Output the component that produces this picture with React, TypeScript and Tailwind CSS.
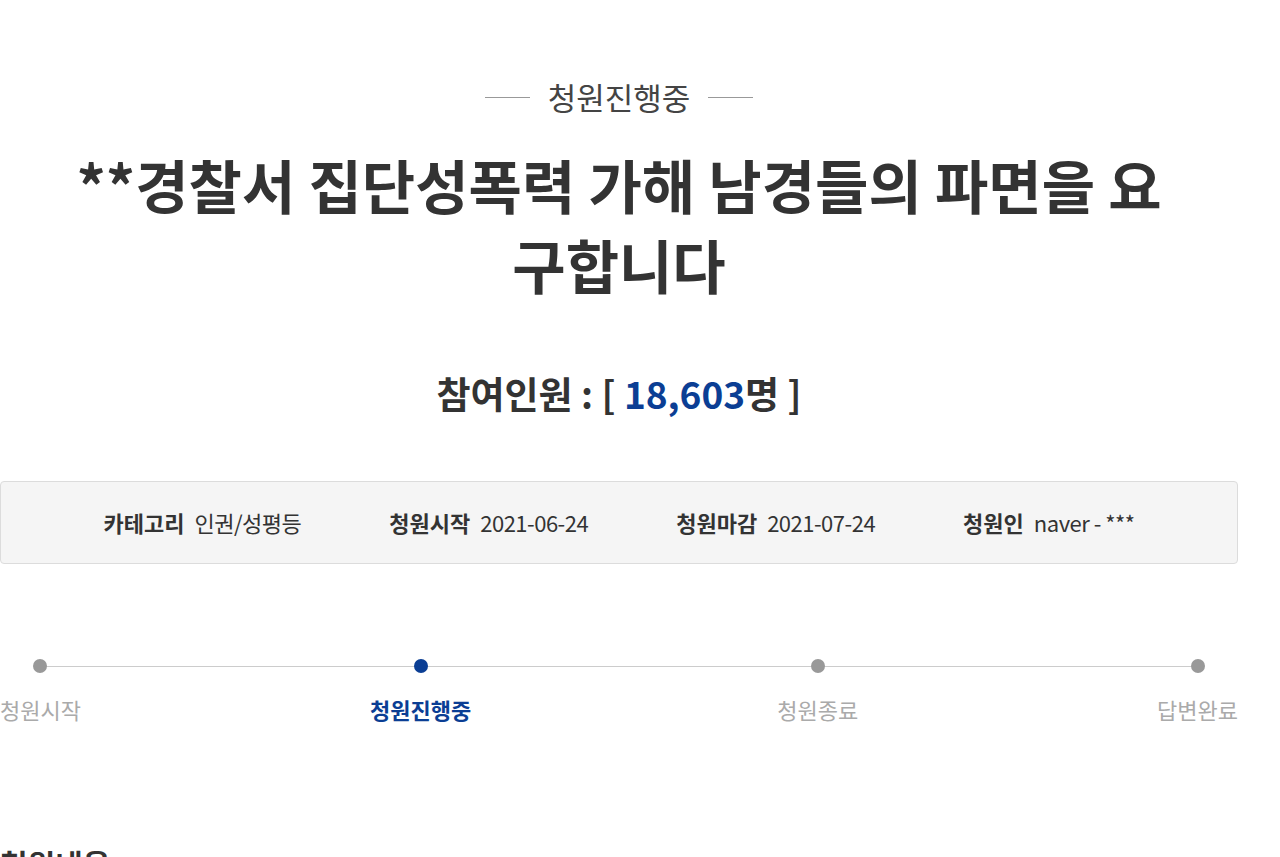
import React from 'react';

const font = "font-['Noto_Sans_CJK_KR','Noto_Sans',sans-serif]";

const infoItems = [
  { label: '카테고리', value: '인권/성평등' },
  { label: '청원시작', value: '2021-06-24' },
  { label: '청원마감', value: '2021-07-24' },
  { label: '청원인', value: 'naver - ***' },
];

const steps = [
  { label: '청원시작', active: false, className: '' },
  { label: '청원진행중', active: true, className: 'ml-[289px]' },
  { label: '청원종료', active: false, className: 'ml-[306px]' },
  { label: '답변완료', active: false, className: 'ml-auto' },
];

const App = () => {
  return (
    <div className={`w-[1238px] bg-white text-[#333] ${font}`}>
      <div className="flex flex-row items-center justify-center gap-x-[18px] pt-[74px]">
        <span className="h-px w-[45px] bg-[#999]" />
        <p className="text-[31px] leading-[46px] text-[#444]">청원진행중</p>
        <span className="h-px w-[45px] bg-[#999]" />
      </div>

      <h1 className="mt-[24px] px-[70px] text-center text-[58px] font-bold leading-[80px] text-[#333]">
        **경찰서 집단성폭력 가해 남경들의 파면을 요구합니다
      </h1>

      <p className="mt-[62px] text-center text-[37px] font-bold leading-[54px] text-[#333]">
        참여인원 : [ <span className="text-[#0b3e94]">18,603</span>명 ]
      </p>

      <div className="mt-[61px] flex h-[83px] flex-row items-center justify-center gap-x-[88px] rounded-[4px] border border-[#dcdcdc] bg-[#f5f5f5]">
        {infoItems.map((item) => (
          <div key={item.label} className="flex flex-row items-center gap-x-[10px] text-[22px]">
            <span className="font-bold text-[#333]">{item.label}</span>
            <span className="tracking-[-0.5px] text-[#333]">{item.value}</span>
          </div>
        ))}
      </div>

      <div className="relative mt-[95px]">
        <div className="absolute left-[41px] right-[41px] top-[7px] h-px bg-[#cccccc]" />
        <div className="relative flex flex-row">
          {steps.map((step) => (
            <div key={step.label} className={`flex flex-col items-center ${step.className}`}>
              <span
                className={`h-[14px] w-[14px] rounded-full ${step.active ? 'bg-[#0b3e94]' : 'bg-[#999]'}`}
              />
              <p
                className={`mt-[20px] text-[22px] leading-[33px] ${
                  step.active ? 'font-bold text-[#0b3e94]' : 'text-[#aaa]'
                }`}
              >
                {step.label}
              </p>
            </div>
          ))}
        </div>
      </div>

      <h2 className="mt-[115px] text-[30px] font-bold leading-[45px] text-[#333]">청원내용</h2>
    </div>
  );
};

export default App;
